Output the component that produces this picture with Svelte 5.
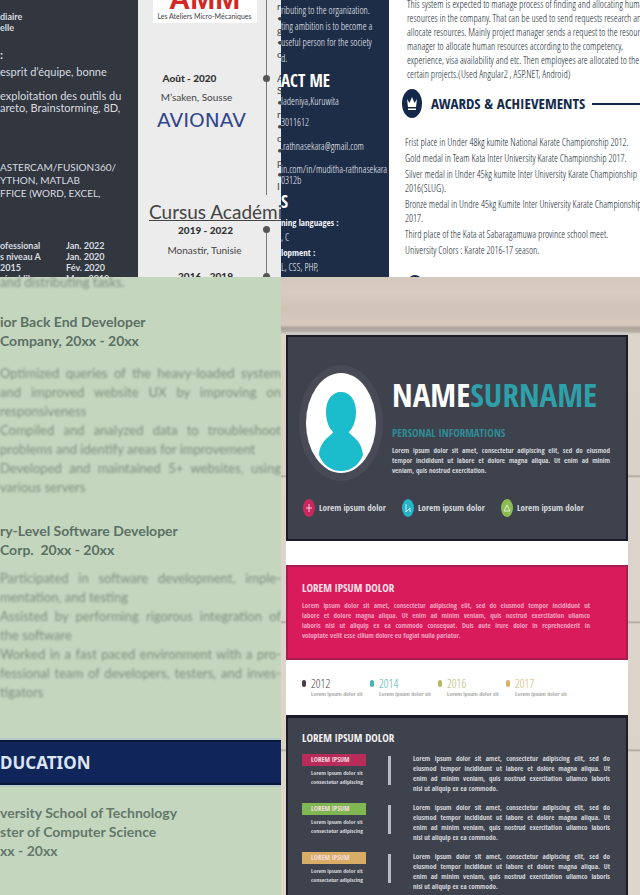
<script>
  const fragments = ['r', '•', 'g', '•', 'c', '', 'A', 'S', '•', 'r', '•', 'c', '•', 'p', '•', 'I'];
  const certificates = [
    ['ofessional', 'Jan. 2022'],
    ['s niveau A', 'Jan. 2020'],
    ['2015', 'Fév. 2020'],
    ['républik', 'Mars 2019']
  ];
  const projectLines = [
    'This system is expected to manage process of finding and allocating human',
    'resources in the company. That can be used to send requests research and',
    'allocate resources. Mainly project manager sends a request to the resource',
    'manager to allocate human resources according to the competency,',
    'experience, visa availability and etc. Then employees are allocated to the',
    'certain projects.(Used Angular2 , ASP.NET, Android)'
  ];
  const awards = [
    ['Frist place in Under 48kg kumite National Karate Championship 2012.'],
    ['Gold medal in Team Kata Inter University Karate Championship 2017.'],
    ['Silver medal in Under 45kg kumite Inter University Karate Championship', '2016(SLUG).'],
    ['Bronze medal in Undre 45kg Kumite Inter University Karate Championship', '2017.'],
    ['Third place of the Kata at Sabaragamuwa province school meet.'],
    ['University Colors : Karate 2016-17 season.']
  ];
  const jobs = [
    {
      title: 'ior Back End Developer',
      company: 'Company, 20xx - 20xx',
      points: [
        ['Optimized queries of the heavy-loaded system', 'and improved website UX by improving on', 'responsiveness'],
        ['Compiled and analyzed data to troubleshoot', 'problems and identify areas for improvement'],
        ['Developed and maintained 5+ websites, using', 'various servers']
      ]
    },
    {
      title: 'ry-Level Software Developer',
      company: 'Corp.  20xx - 20xx',
      points: [
        ['Participated in software development, imple-', 'mentation, and testing'],
        ['Assisted by performing rigorous integration of', 'the software'],
        ['Worked in a fast paced environment with a pro-', 'fessional team of developers, testers, and inves-', 'tigators']
      ]
    }
  ];
  const contacts = [
    { color: '#c8285f', mark: 'M-3 0H3M0 -4V4' },
    { color: '#25b4c8', mark: 'M-2 -4V4L2 0V4' },
    { color: '#8cbb50', mark: 'M-3 3L0 -3L3 3Z' }
  ];
  const years = [
    { year: '2012', color: '#4b3a44' },
    { year: '2014', color: '#4bb3ae' },
    { year: '2016', color: '#b5b85e' },
    { year: '2017', color: '#d5b565' }
  ];
  const entries = ['#b92b58', '#7fb752', '#d9ad66'];
</script>

<main class="collage">
  <section class="pane french">
    <aside class="skills">
      <p class="small">diaire<br />elle</p>
      <h2>:</h2>
      <p class="traits">esprit d’équipe, bonne</p>
      <p class="tools">exploitation des outils du<br />areto, Brainstorming, 8D,</p>
      <p class="software">ASTERCAM/FUSION360/<br />YTHON, MATLAB<br />FFICE (WORD, EXCEL,</p>
      <table>
        <tbody>
          {#each certificates as [name, date]}
            <tr><td>{name}</td><td>{date}</td></tr>
          {/each}
        </tbody>
      </table>
    </aside>
    <div class="career">
      <div class="events">
        <div class="amm"><strong>AMM</strong><span>Les Ateliers Micro-Mécaniques</span></div>
        <p class="date">Août - 2020</p>
        <p class="place">M’saken, Sousse</p>
        <div class="avionav">AVIONAV</div>
        <h2>Cursus Académique</h2>
        <p class="date school">2019 - 2022</p>
        <p class="place town">Monastir, Tunisie</p>
        <p class="date next">2016 - 2019</p>
      </div>
      <div class="timeline">
        <div class="stretch first"><i></i></div>
        <div class="stretch second"><i></i><i></i></div>
      </div>
      <div class="cut">
        {#each fragments as f}<span>{f}</span>{/each}
      </div>
    </div>
  </section>

  <section class="pane karate">
    <aside class="contact">
      <p class="about">ributing to the organization.<br />ting ambition is to become a<br />useful person for the society<br />d.</p>
      <h2>ACT ME</h2>
      <p class="line">ladeniya,Kuruwita</p>
      <p class="line">3011612</p>
      <a href="#mail">.rathnasekara@gmail.com</a>
      <a class="profile" href="#profile">in.com/in/muditha-rathnasekara<br />0312b</a>
      <h2 class="skill">S</h2>
      <p class="langs"><b>ning languages :</b><br />, C<br /><b>lopment :</b><br />L, CSS, PHP,</p>
    </aside>
    <div class="achievements">
      <p class="project">{#each projectLines as l}<span>{l}</span>{/each}</p>
      <header>
        <svg width="20" height="29" viewBox="0 0 20 29"><ellipse cx="10" cy="14.5" rx="10" ry="14.5" fill="#14294a" /><path d="M5 10L7.500 14L10 8L12.500 14L15 10L14 18H6ZM6 19.500H14V21H6Z" fill="#fff" /></svg>
        <h2>AWARDS &amp; ACHIEVEMENTS</h2>
        <hr />
      </header>
      <ul>
        {#each awards as a}<li>{#each a as l}<span>{l}</span>{/each}</li>{/each}
      </ul>
      <svg class="more" width="20" height="29" viewBox="0 0 20 29"><ellipse cx="10" cy="14.5" rx="10" ry="14.5" fill="#14294a" /></svg>
    </div>
  </section>

  <section class="pane green">
    <p class="tail">and distributing tasks.</p>
    {#each jobs as job}
      <article>
        <h3>{job.title}<br />{job.company}</h3>
        <ul>
          {#each job.points as lines}
            <li>{#each lines as l, i}<span class:full={i < lines.length - 1 && l.length > 38}>{l}</span>{/each}</li>
          {/each}
        </ul>
      </article>
    {/each}
    <h2>DUCATION</h2>
    <p class="degree">versity School of Technology<br />ster of Computer Science<br />xx - 20xx</p>
  </section>

  <section class="pane wood">
    <div class="sheet">
      <header class="profile-head">
        <svg width="86" height="118" viewBox="0 0 86 118">
          <ellipse cx="43" cy="59" rx="42" ry="58" fill="#484b56" />
          <ellipse cx="43" cy="59" rx="35" ry="50" fill="#fff" />
          <path d="M43 28C52 28 58 36 58 48C58 57 55 64 51 68C51 71 64 75 65 91C61 101 53 107 43 107S25 101 21 91C22 75 35 71 35 68C31 64 28 57 28 48C28 36 34 28 43 28Z" fill="#1bbccb" />
        </svg>
        <div class="intro">
          <h1>NAME<span>SURNAME</span></h1>
          <h2>PERSONAL INFORMATIONS</h2>
          <p class="lorem"><span class="full">Lorem ipsum dolor sit amet, consectetur adipiscing elit, sed do eiusmod</span><span class="full">tempor incididunt ut labore et dolore magna aliqua. Ut enim ad minim</span><span>veniam, quis nostrud exercitation.</span></p>
        </div>
        <div class="contacts">
          {#each contacts as c}
            <div><svg width="12" height="18" viewBox="-6 -9 12 18"><ellipse rx="6" ry="9" fill={c.color} /><path d={c.mark} fill="none" stroke="#fff" stroke-opacity=".75" /></svg>Lorem ipsum dolor</div>
          {/each}
        </div>
      </header>
      <section class="pink">
        <h2>LOREM IPSUM DOLOR</h2>
        <p class="lorem"><span class="full">Lorem ipsum dolor sit amet, consectetur adipiscing elit, sed do eiusmod tempor incididunt ut</span><span class="full">labore et dolore magna aliqua. Ut enim ad minim veniam, quis nostrud exercitation ullamco</span><span class="full">laboris nisi ut aliquip ex ea commodo consequat. Duis aute irure dolor in reprehenderit in</span><span>voluptate velit esse cillum dolore eu fugiat nulla pariatur.</span></p>
      </section>
      <section class="years">
        {#each years as y}
          <div style:color={y.color}><i></i><b>{y.year}</b><small>Lorem ipsum dolor sit</small></div>
        {/each}
      </section>
      <section class="history">
        <h2>LOREM IPSUM DOLOR</h2>
        {#each entries as color}
          <article>
            <div class="label"><b style:background={color}>LOREM IPSUM</b><small>Lorem ipsum dolor sit<br />consectetur adipiscing</small></div>
            <i></i>
            <p class="lorem"><span class="full">Lorem ipsum dolor sit amet, consectetur adipiscing elit, sed do</span><span class="full">eiusmod tempor incididunt ut labore et dolore magna aliqua. Ut</span><span class="full">enim ad minim veniam, quis nostrud exercitation ullamco laboris</span><span>nisi ut aliquip ex ea commodo.</span></p>
          </article>
        {/each}
      </section>
    </div>
  </section>
</main>

<style>
  :global(body) { margin: 0; }
  .collage {
    --narrow: "Open Sans Condensed", "Liberation Sans Narrow", "Open Sans", sans-serif;
    --light: "Open Sans Condensed Light", "Open Sans Condensed", "Liberation Sans Narrow", sans-serif;
    display: grid;
    grid-template-columns: 281fr 359fr;
    grid-template-rows: 277fr 618fr;
    height: 100vh;
    overflow: hidden;
    font-family: Lato, sans-serif;
  }
  .collage * { box-sizing: border-box; }
  .pane { min-width: 0; min-height: 0; overflow: hidden; white-space: nowrap; }
  h1, h2, h3, p, ul { margin: 0; padding: 0; list-style: none; }
  svg { display: block; flex: none; }
  span.full { text-align: justify; text-align-last: justify; }

  .french { display: grid; grid-template-columns: 138fr 143fr; background: #ececec; }
  .skills { background: #31363f; color: #d9dce0; overflow: hidden; min-width: 0; min-height: 0; padding-top: 11px; font-size: 11px; line-height: 12px; }
  .small { font-size: 9px; line-height: 11px; font-weight: 700; }
  .skills h2 { font-size: 12px; line-height: 12px; margin-top: 16px; }
  .traits { margin-top: 5px; }
  .tools { margin-top: 12px; }
  .software { margin-top: 47px; font-size: 10px; line-height: 13px; }
  table { width: 100%; margin-top: 40px; border-spacing: 0; font-size: 9px; line-height: 11px; font-weight: 700; }
  td { padding: 0; }
  td:first-child { width: 66px; }

  .career { display: grid; grid-template-columns: 1fr 22px 4px; color: #444; min-width: 0; min-height: 0; overflow: hidden; }
  .events { display: flex; flex-direction: column; align-items: center; min-width: 0; }
  .amm { width: 104px; height: 23px; background: #fff; display: flex; flex-direction: column; align-items: center; justify-content: flex-end; margin-left: 16px; color: #444; }
  .amm strong { font: 700 30px/21px "Liberation Sans", sans-serif; color: #cf2a28; }
  .amm span { font: 7px/14px Lato, sans-serif; }
  .date { font-size: 10px; line-height: 12px; font-weight: 900; color: #333; margin-top: 49px; padding-right: 14px; }
  .place { font-size: 10px; line-height: 12px; margin-top: 7px; }
  .avionav { font: 20px/20px "DejaVu Sans", sans-serif; color: #31478c; margin-top: 7px; padding-left: 10px; }
  h2 { font-weight: 700; }
  .events h2 { align-self: flex-start; margin: 70px 0 0 11px; font-size: 19px; line-height: 23px; font-weight: 400; text-decoration: underline; text-decoration-thickness: 1px; }
  .date.school, .date.next { padding: 0 0 0 18px; }
  .date.school { margin-top: 1px; }
  .place.town { margin-top: 8px; padding-left: 16px; }
  .date.next { margin-top: 14px; }
  .timeline { display: flex; flex-direction: column; }
  .stretch { width: 1px; background: #777; margin-left: 11px; display: flex; flex-direction: column; align-items: center; }
  .stretch i { flex: none; width: 7px; height: 7px; border-radius: 50%; background: #555; }
  .first { height: 195px; padding-top: 75px; }
  .second { margin-top: 31px; height: 54px; justify-content: space-between; }
  .cut { overflow: hidden; font-size: 10px; }
  .cut span { display: block; height: 12px; line-height: 12px; }

  .karate { display: grid; grid-template-columns: 108fr 251fr; font-family: var(--light); font-weight: 300; background: #fff; }
  .karate h2, .karate b { font-family: var(--narrow); font-weight: 700; }
  .contact { background: #1d2c47; color: #f0f3f8; overflow: hidden; min-width: 0; min-height: 0; font-size: 10px; }
  .about { margin-top: 2px; line-height: 16px; }
  .contact h2 { font-size: 17px; line-height: 20px; color: #fff; margin-top: 5px; }
  .line { line-height: 21px; }
  .contact a { display: block; color: inherit; text-decoration: none; line-height: 24px; margin-top: 1px; }
  .contact .profile { line-height: 11px; margin-top: 6px; }
  .contact .skill { margin-top: 6px; }
  .langs { line-height: 15px; margin-top: 3px; }
  .langs b { font-size: 9px; }
  .achievements { min-width: 0; min-height: 0; overflow: hidden; color: #101c2c; font-size: 10px; padding-left: 16px; }
  .achievements span { display: block; }
  .project { margin: -3px 0 0 2px; line-height: 14px; }
  .karate header { display: flex; align-items: center; margin: 8px 0 17px -3px; }
  .karate header h2 { font-size: 15px; line-height: 29px; color: #14294a; margin: 0 7px 0 9px; }
  hr { flex: 1; margin: 0; border: 0; border-top: 2px solid #14294a; }
  .achievements li { line-height: 14px; margin-bottom: 2px; }
  .more { margin-top: 18px; }

  .green { background: #c5d6bf; color: #7c907c; font-size: 13px; line-height: 19px; }
  .tail { margin-top: -4px; }
  .tail, .green ul { filter: blur(1px); }
  article h3 { font-size: 14px; line-height: 19px; color: #5a7063; white-space: pre; }
  .green article { margin-top: 20px; }
  .green article + article { margin-top: 24px; }
  .green ul { margin-top: 14px; }
  .green article + article ul { margin-top: 10px; }
  .green li span { display: block; }
  .green h2 { margin-top: 38px; height: 45px; background: #10265a; border: solid #071839; border-width: 2px 0; outline: 2px solid #b7cacb; color: #dce5f3; font: 700 17px/41px "Noto Sans", sans-serif; }
  .degree { margin-top: 18px; color: #63786b; font-size: 14px; font-weight: 700; }

  .wood {
    padding: 55px 12px 0 5px;
    font-family: var(--narrow);
    background: linear-gradient(#d5c9be 0, #d8ccc2 16px, #cfc3b8 32px, #d6cac0 48px, #aca39b 51px, #b9b1a9 55px, #ddd4ca 57px, #d9d0c6 198px, #aaa198 199px, #ddd5cb 201px, #dbd3c9 344px, #aaa198 345px, #ddd5cb 347px, #dcd3c8 472px, #aaa198 473px, #ded6ca 475px);
  }
  .sheet { background: #fff; border-top: 3px solid #c9c7c5; color: #d5d7dc; height: 100%; }
  .lorem { font-size: 7px; line-height: 10px; }
  .lorem span { display: block; }
  .profile-head { background: #3e424d; border: 2px solid #1b1c25; height: 206px; display: grid; grid-template-columns: 86px 1fr; padding: 27px 16px 0 10px; align-content: start; }
  .intro { padding-left: 8px; min-width: 0; }
  h1 { font-size: 33px; line-height: 48px; margin-top: 7px; color: #fff; font-weight: 700; }
  h1 span { color: #2f9fa9; }
  .intro h2 { font-size: 11px; line-height: 12px; margin: 8px 0 7px; color: #2f8c96; }
  .contacts { grid-column: 1 / 3; display: grid; grid-template-columns: 99px 99px 1fr; margin: 17px 0 0 5px; font-size: 9px; line-height: 18px; font-weight: 700; }
  .contacts div { display: flex; gap: 4px; }
  .pink { margin-top: 24px; height: 95px; background: #d91b5c; border: 2px solid #a61e50; padding: 13px 36px 0 14px; color: #f3a3c0; }
  .pink h2, .history h2 { font-size: 11px; line-height: 16px; color: #ffe2ec; }
  .pink .lorem { margin-top: 5px; }
  .years { display: grid; grid-template-columns: repeat(4, 68px); padding-left: 16px; height: 55px; align-content: center; }
  .years div { display: grid; grid-template-columns: 4px 1fr; column-gap: 5px; align-items: center; }
  .years i { height: 7px; border-radius: 2px; background: currentColor; }
  .years b { font-size: 12px; line-height: 13px; font-family: var(--light); font-weight: 300; }
  .years small { grid-column: 2; font-size: 6px; line-height: 8px; color: #aaa; }
  .history { background: #3e424d; border: solid #1b1c25; border-width: 3px 2px 0; padding: 12px 16px 0 14px; min-height: 180px; }
  .history h2 { color: #f1f1f3; margin-bottom: 8px; }
  .history article { display: grid; grid-template-columns: 64px 3px 1fr; column-gap: 22px; margin-bottom: 9px; align-items: start; }
  .history i { height: 29px; margin-top: 2px; background: #b9bcc4; }
  .label b { display: block; font-size: 7px; line-height: 12px; padding-left: 9px; color: #f6dce0; }
  .label small { display: block; font-size: 6px; line-height: 9px; padding: 3px 0 0 9px; }
</style>
